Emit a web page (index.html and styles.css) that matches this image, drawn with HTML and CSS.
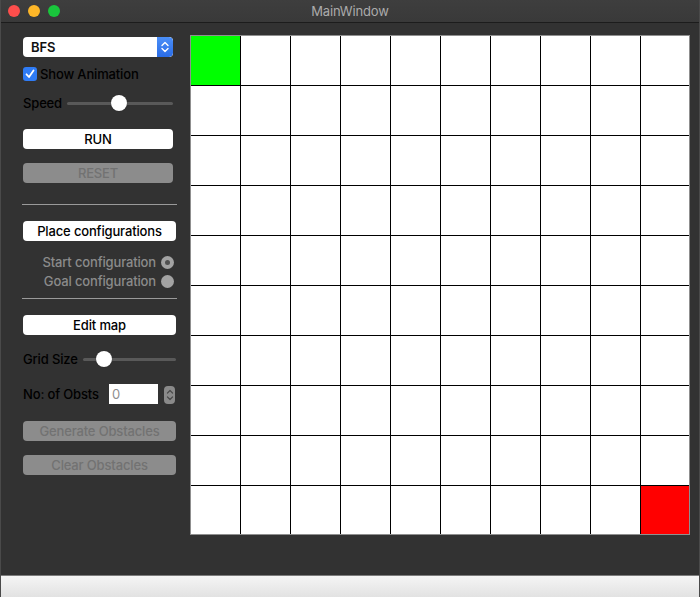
FILE: index.html
```html
<!DOCTYPE html>
<html>
<head>
<meta charset="utf-8">
<link rel="stylesheet" href="styles.css">
</head>
<body>
<div class="window">
  <div class="titlebar">
    <div class="lights">
      <span class="light red"></span>
      <span class="light yellow"></span>
      <span class="light green"></span>
    </div>
    <div class="title">MainWindow</div>
  </div>
  <div class="content">
    <div class="panel">
      <div class="combo">
        <span class="combo-text">BFS</span>
        <span class="combo-step">
          <svg width="10" height="14" viewBox="0 0 10 14"><path d="M2 5.5 L5 2.5 L8 5.5 M2 8.5 L5 11.5 L8 8.5" fill="none" stroke="#fff" stroke-width="1.4" stroke-linecap="round" stroke-linejoin="round"/></svg>
        </span>
      </div>
      <div class="check-row">
        <span class="checkbox">
          <svg width="14" height="14" viewBox="0 0 14 14"><path d="M3.5 7.3 L6 10 L10.5 3.5" fill="none" stroke="#fff" stroke-width="1.8" stroke-linecap="round" stroke-linejoin="round"/></svg>
        </span>
        <span class="label">Show Animation</span>
      </div>
      <div class="slider-row speed">
        <span class="label">Speed</span>
        <div class="slider"><span class="track"></span><span class="handle"></span></div>
      </div>
      <button class="btn run">RUN</button>
      <button class="btn disabled reset">RESET</button>
      <div class="sep sep1"></div>
      <button class="btn wide place">Place configurations</button>
      <div class="radio-row start">
        <span class="radio-label">Start configuration</span>
        <span class="radio checked"></span>
      </div>
      <div class="radio-row goal">
        <span class="radio-label">Goal configuration</span>
        <span class="radio"></span>
      </div>
      <div class="sep sep2"></div>
      <button class="btn wide edit">Edit map</button>
      <div class="slider-row gridsize">
        <span class="label">Grid Size</span>
        <div class="slider"><span class="track"></span><span class="handle"></span></div>
      </div>
      <div class="obst-row">
        <span class="label">No: of Obsts</span>
        <span class="spin-input">0</span>
        <span class="spin-step">
          <svg width="8" height="14" viewBox="0 0 8 14"><path d="M1.5 5 L4 2.5 L6.5 5 M1.5 9 L4 11.5 L6.5 9" fill="none" stroke="#4a4a4a" stroke-width="1.2" stroke-linecap="round" stroke-linejoin="round"/></svg>
        </span>
      </div>
      <button class="btn wide disabled gen">Generate Obstacles</button>
      <button class="btn wide disabled clear">Clear Obstacles</button>
    </div>
    <div class="grid-wrap">
      <div class="grid">
        <div class="cell start-cell"></div><div class="cell"></div><div class="cell"></div><div class="cell"></div><div class="cell"></div><div class="cell"></div><div class="cell"></div><div class="cell"></div><div class="cell"></div><div class="cell"></div>
        <div class="cell"></div><div class="cell"></div><div class="cell"></div><div class="cell"></div><div class="cell"></div><div class="cell"></div><div class="cell"></div><div class="cell"></div><div class="cell"></div><div class="cell"></div>
        <div class="cell"></div><div class="cell"></div><div class="cell"></div><div class="cell"></div><div class="cell"></div><div class="cell"></div><div class="cell"></div><div class="cell"></div><div class="cell"></div><div class="cell"></div>
        <div class="cell"></div><div class="cell"></div><div class="cell"></div><div class="cell"></div><div class="cell"></div><div class="cell"></div><div class="cell"></div><div class="cell"></div><div class="cell"></div><div class="cell"></div>
        <div class="cell"></div><div class="cell"></div><div class="cell"></div><div class="cell"></div><div class="cell"></div><div class="cell"></div><div class="cell"></div><div class="cell"></div><div class="cell"></div><div class="cell"></div>
        <div class="cell"></div><div class="cell"></div><div class="cell"></div><div class="cell"></div><div class="cell"></div><div class="cell"></div><div class="cell"></div><div class="cell"></div><div class="cell"></div><div class="cell"></div>
        <div class="cell"></div><div class="cell"></div><div class="cell"></div><div class="cell"></div><div class="cell"></div><div class="cell"></div><div class="cell"></div><div class="cell"></div><div class="cell"></div><div class="cell"></div>
        <div class="cell"></div><div class="cell"></div><div class="cell"></div><div class="cell"></div><div class="cell"></div><div class="cell"></div><div class="cell"></div><div class="cell"></div><div class="cell"></div><div class="cell"></div>
        <div class="cell"></div><div class="cell"></div><div class="cell"></div><div class="cell"></div><div class="cell"></div><div class="cell"></div><div class="cell"></div><div class="cell"></div><div class="cell"></div><div class="cell"></div>
        <div class="cell"></div><div class="cell"></div><div class="cell"></div><div class="cell"></div><div class="cell"></div><div class="cell"></div><div class="cell"></div><div class="cell"></div><div class="cell"></div><div class="cell goal-cell"></div>
      </div>
    </div>
  </div>
  <div class="statusbar"></div>
</div>
</body>
</html>
```

FILE: styles.css
```css
* { box-sizing: border-box; }
html, body {
  margin: 0;
  padding: 0;
  width: 700px;
  height: 597px;
  overflow: hidden;
  background: #323232;
}
body {
  font-family: Inter, "Noto Sans", "Liberation Sans", sans-serif;
  font-size: 13px;
  letter-spacing: -0.15px;
}
.window {
  width: 700px;
  height: 597px;
  display: flex;
  flex-direction: column;
  background: #323232;
  border-left: 1px solid #4a4a4a;
  border-right: 1px solid #4a4a4a;
}
.titlebar {
  height: 23px;
  flex: none;
  background: linear-gradient(#3e3e3e, #393939);
  border-bottom: 1px solid #1c1c1c;
  position: relative;
  display: flex;
  align-items: center;
  justify-content: center;
}
.lights {
  position: absolute;
  left: 7px;
  top: 5px;
  display: flex;
  gap: 8px;
}
.light {
  width: 12px;
  height: 12px;
  border-radius: 50%;
  display: block;
}
.light.red { background: #fd4e4c; }
.light.yellow { background: #fdb628; }
.light.green { background: #19c63c; }
.title {
  color: #ababab;
  font-size: 13px;
  margin-top: -1px;
}
.content {
  flex: 1;
  display: flex;
}
.panel {
  width: 189px;
  flex: none;
  padding: 14px 0 0 22px;
  display: flex;
  flex-direction: column;
  align-items: flex-start;
}
.label {
  color: #000;
  font-weight: 500;
  font-size: 13px;
  line-height: 14px;
  white-space: nowrap;
}
.combo {
  width: 150px;
  height: 20px;
  background: #fff;
  border-radius: 4px;
  display: flex;
  align-items: center;
  justify-content: space-between;
  overflow: hidden;
}
.combo-text {
  padding-left: 8px;
  color: #111;
  font-weight: 600;
  font-size: 13px;
}
.combo-step {
  width: 16px;
  height: 20px;
  background: linear-gradient(#4b8ff8, #2a6ce6);
  border-radius: 0 4px 4px 0;
  display: flex;
  align-items: center;
  justify-content: center;
}
.check-row {
  margin-top: 10px;
  display: flex;
  align-items: center;
  gap: 3px;
  height: 14px;
}
.checkbox {
  width: 14px;
  height: 14px;
  border-radius: 3px;
  background: #2f7cf6;
  display: flex;
}
.slider-row {
  display: flex;
  align-items: center;
  height: 16px;
}
.speed { margin-top: 14px; width: 150px; }
.gridsize { margin-top: 16px; width: 153px; }
.speed .label { width: 37px; }
.gridsize .label { width: 54px; }
.slider {
  flex: 1;
  height: 16px;
  position: relative;
  display: flex;
  align-items: center;
}
.speed .slider { margin-left: 7px; }
.gridsize .slider { margin-left: 6px; }
.track {
  display: block;
  width: 100%;
  height: 3px;
  border-radius: 2px;
  background: #595959;
}
.handle {
  position: absolute;
  top: 0;
  width: 16px;
  height: 16px;
  border-radius: 50%;
  background: #fff;
  box-shadow: 0 0 1px rgba(0,0,0,0.5);
}
.speed .handle { left: 44px; }
.gridsize .handle { left: 13px; }
.btn {
  font-family: inherit;
  font-size: 13px;
  font-weight: 500;
  letter-spacing: -0.15px;
  height: 20px;
  width: 150px;
  border: none;
  border-radius: 4px;
  background: #fff;
  color: #000;
  padding: 0;
  line-height: 20px;
  display: block;
}
.btn.wide { width: 153px; }
.btn.disabled {
  background: #8c8c8c;
  color: #727272;
}
.run { margin-top: 18px; }
.reset { margin-top: 14px; }
.sep {
  width: 155px;
  height: 1px;
  background: #9a9a9a;
  margin-left: -1px;
}
.sep1 { margin-top: 21px; }
.place { margin-top: 16px; }
.radio-row {
  width: 151px;
  height: 14px;
  display: flex;
  align-items: center;
  justify-content: flex-end;
  gap: 5px;
}
.radio-row.start { margin-top: 14px; }
.radio-row.goal { margin-top: 5px; }
.radio-label {
  color: #8b8b8b;
  font-size: 13px;
  font-weight: 500;
  white-space: nowrap;
}
.radio {
  width: 13px;
  height: 13px;
  border-radius: 50%;
  background: #a3a3a3;
  display: flex;
  align-items: center;
  justify-content: center;
}
.radio.checked::after {
  content: "";
  width: 5px;
  height: 5px;
  border-radius: 50%;
  background: #505050;
}
.sep2 { margin-top: 10px; }
.edit { margin-top: 16px; }
.obst-row {
  margin-top: 17px;
  height: 20px;
  display: flex;
  align-items: center;
}
.obst-row .label { width: 75px; }
.spin-input {
  margin-left: 11px;
  width: 49px;
  height: 20px;
  background: #fff;
  color: #8e8e8e;
  padding-left: 3px;
  line-height: 20px;
}
.spin-step {
  margin-left: 6px;
  width: 11px;
  height: 18px;
  margin-top: 2px;
  border-radius: 4px;
  background: #8a8a8a;
  display: flex;
  align-items: center;
  justify-content: center;
}
.gen { margin-top: 17px; }
.clear { margin-top: 14px; }
.grid-wrap {
  padding-top: 12px;
}
.grid {
  width: 500px;
  height: 500px;
  border: 1px solid #8f8f8f;
  background: #000;
  display: grid;
  grid-template-columns: repeat(9, 49px) 48px;
  grid-template-rows: repeat(9, 49px) 48px;
  gap: 1px;
}
.cell { background: #fff; }
.start-cell { background: #00ff00; }
.goal-cell { background: #ff0000; }
.statusbar {
  height: 22px;
  flex: none;
  border-top: 1px solid #7c7c7c;
  background: linear-gradient(#f5f5f5, #e2e2e2);
}
```
